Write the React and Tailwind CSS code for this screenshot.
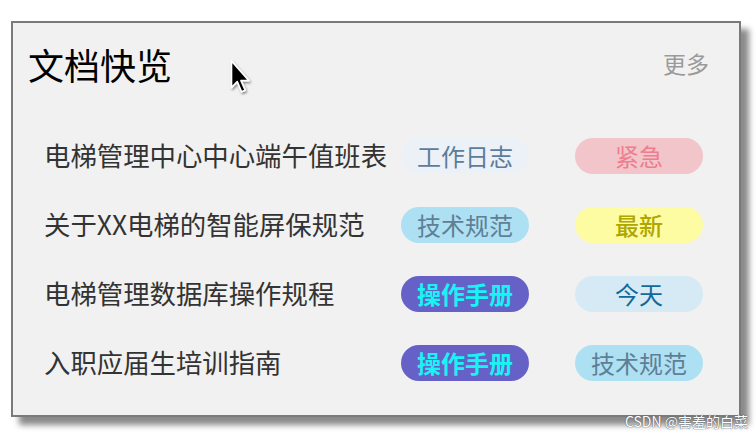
import React from "react";

const rows = [
  {
    title: "电梯管理中心中心端午值班表",
    a: { t: "工作日志", c: "bg-[#ebf1f6] text-[#5b7c9b]" },
    b: { t: "紧急", c: "bg-[#f1c5ca] text-[#ee7d8d]" },
  },
  {
    title: "关于XX电梯的智能屏保规范",
    a: { t: "技术规范", c: "bg-[#aee0f3] text-[#5f7f96]" },
    b: { t: "最新", c: "bg-[#fdfca3] text-[#b0a600] font-medium" },
  },
  {
    title: "电梯管理数据库操作规程",
    a: { t: "操作手册", c: "bg-[#6661c6] text-[#19f3f3] font-semibold" },
    b: { t: "今天", c: "bg-[#d5eaf5] text-[#10699a]" },
  },
  {
    title: "入职应届生培训指南",
    a: { t: "操作手册", c: "bg-[#6661c6] text-[#19f3f3] font-semibold" },
    b: { t: "技术规范", c: "bg-[#aee0f3] text-[#5f7f96]" },
  },
];

function Tag({ t, c }) {
  return (
    <div
      className={`h-[36px] w-[128px] rounded-full flex items-center justify-center text-[24px] leading-none ${c}`}
    >
      {t}
    </div>
  );
}

export default function App() {
  return (
    <div
      className="relative w-[756px] h-[433px] bg-white overflow-hidden pt-[21px] pl-[11px]"
      style={{ fontFamily: '"Noto Sans CJK SC", "Noto Sans", sans-serif' }}
    >
      <div className="w-[730px] h-[396px] border-2 border-[#7a7a7a] bg-[#f1f1f1] shadow-[8px_8px_6px_#8a8a8a]">
        <div className="flex items-center justify-between pl-[15px] pr-[30px] pt-[23px] h-[59px]">
          <div className="text-[36px] leading-none text-black">文档快览</div>
          <div className="text-[23px] leading-none text-[#9a9a9a] mt-[-2px]">更多</div>
        </div>
        <div className="mt-[39px] pl-[31px] flex flex-col">
          {rows.map((r, i) => (
            <div
              key={i}
              className="grid grid-cols-[311px_128px_128px] gap-x-[46px] items-center h-[69px]"
            >
              <div className="text-[26.4px] leading-none text-[#333] whitespace-nowrap">
                {r.title}
              </div>
              <Tag {...r.a} />
              <Tag {...r.b} />
            </div>
          ))}
        </div>
      </div>

      <svg
        className="absolute left-[229px] top-[60px]"
        width="24"
        height="36"
        viewBox="0 0 22 34"
      >
        <defs>
          <filter id="s" x="-50%" y="-50%" width="200%" height="200%">
            <feDropShadow dx="1" dy="1.5" stdDeviation="1" floodColor="#000" floodOpacity="0.45" />
          </filter>
        </defs>
        <path
          d="M2 1 L2 26 L7.5 20.5 L11.5 30 L15 28.5 L11 19.5 L18.5 19.5 Z"
          fill="#000"
          stroke="#fff"
          strokeWidth="1.6"
          strokeLinejoin="round"
          filter="url(#s)"
        />
      </svg>

      <div
        className="absolute right-[8px] bottom-[5px] text-[14px] leading-none text-white whitespace-nowrap"
        style={{ textShadow: "0 0 1px #555, 0 0 1px #555" }}
      >
        CSDN @害羞的白菜
      </div>
    </div>
  );
}
